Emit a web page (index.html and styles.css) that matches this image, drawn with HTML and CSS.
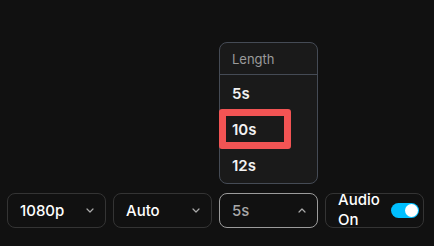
FILE: index.html
```html
<!DOCTYPE html>
<html>
<head>
<meta charset="utf-8">
<link rel="stylesheet" href="styles.css">
</head>
<body>
<div class="stage">
  <div class="menu">
    <div class="menu-head">Length</div>
    <div class="menu-item">5s</div>
    <div class="menu-item">10s</div>
    <div class="menu-item">12s</div>
  </div>
  <div class="highlight"></div>
  <div class="bar">
    <div class="select">
      <span class="label">1080p</span>
      <svg class="chev" width="8" height="5" viewBox="0 0 8 5"><path d="M1 1l3 3 3-3" fill="none" stroke="#aaa" stroke-width="1.2" stroke-linecap="round" stroke-linejoin="round"/></svg>
    </div>
    <div class="select">
      <span class="label">Auto</span>
      <svg class="chev" width="8" height="5" viewBox="0 0 8 5"><path d="M1 1l3 3 3-3" fill="none" stroke="#aaa" stroke-width="1.2" stroke-linecap="round" stroke-linejoin="round"/></svg>
    </div>
    <div class="select open">
      <span class="label dim">5s</span>
      <svg class="chev" width="8" height="5" viewBox="0 0 8 5"><path d="M1 4l3-3 3 3" fill="none" stroke="#aaa" stroke-width="1.2" stroke-linecap="round" stroke-linejoin="round"/></svg>
    </div>
    <div class="audio">
      <span class="audio-label">Audio<br>On</span>
      <span class="toggle"><span class="knob"></span></span>
    </div>
  </div>
</div>
</body>
</html>
```

FILE: styles.css
```css
html, body {
  margin: 0;
  padding: 0;
  background: #111111;
}
body {
  width: 434px;
  height: 246px;
  overflow: hidden;
  font-family: Inter, "Liberation Sans", sans-serif;
  color: #ffffff;
}
.stage {
  position: relative;
  width: 434px;
  height: 246px;
}
.bar {
  position: absolute;
  left: 7px;
  top: 193px;
  display: flex;
  gap: 7px;
}
.select {
  box-sizing: border-box;
  width: 99px;
  height: 35px;
  border: 1px solid #343434;
  border-radius: 8px;
  display: flex;
  align-items: center;
  justify-content: space-between;
  padding: 0 11px 0 12px;
  background: #111111;
}
.select.open {
  border-color: #9b9b9b;
}
.label {
  font-size: 15px;
  font-weight: 500;
  color: #ffffff;
}
.label.dim {
  color: #a8a8a8;
}
.chev {
  display: block;
}
.audio {
  box-sizing: border-box;
  width: 99px;
  height: 35px;
  margin-left: 0;
  border: 1px solid #343434;
  border-radius: 8px;
  display: flex;
  align-items: center;
  justify-content: space-between;
  padding: 0 4px 0 12px;
}
.audio-label {
  font-size: 15px;
  font-weight: 500;
  line-height: 20px;
  margin-top: -1px;
}
.toggle {
  position: relative;
  width: 28px;
  height: 15px;
  border-radius: 8px;
  background: #00bfff;
}
.knob {
  position: absolute;
  right: 1px;
  top: 1px;
  width: 13px;
  height: 13px;
  border-radius: 50%;
  background: #ffffff;
}
.menu {
  position: absolute;
  left: 219px;
  top: 42px;
  box-sizing: border-box;
  width: 99px;
  height: 142px;
  background: #1a1a1a;
  border: 1px solid #454b55;
  border-radius: 8px;
  overflow: hidden;
}
.menu-head {
  height: 32px;
  box-sizing: border-box;
  padding-left: 12px;
  display: flex;
  align-items: center;
  font-size: 13px;
  color: #9a9a9a;
  border-bottom: 1px solid #454b55;
}
.menu-item {
  height: 36px;
  padding-left: 12px;
  display: flex;
  align-items: center;
  font-size: 15px;
  font-weight: 600;
  color: #f2f2f2;
}
.highlight {
  position: absolute;
  left: 219px;
  top: 109px;
  width: 72px;
  height: 40px;
  box-sizing: border-box;
  border: 7px solid #f25454;
  border-radius: 3px;
}
```
